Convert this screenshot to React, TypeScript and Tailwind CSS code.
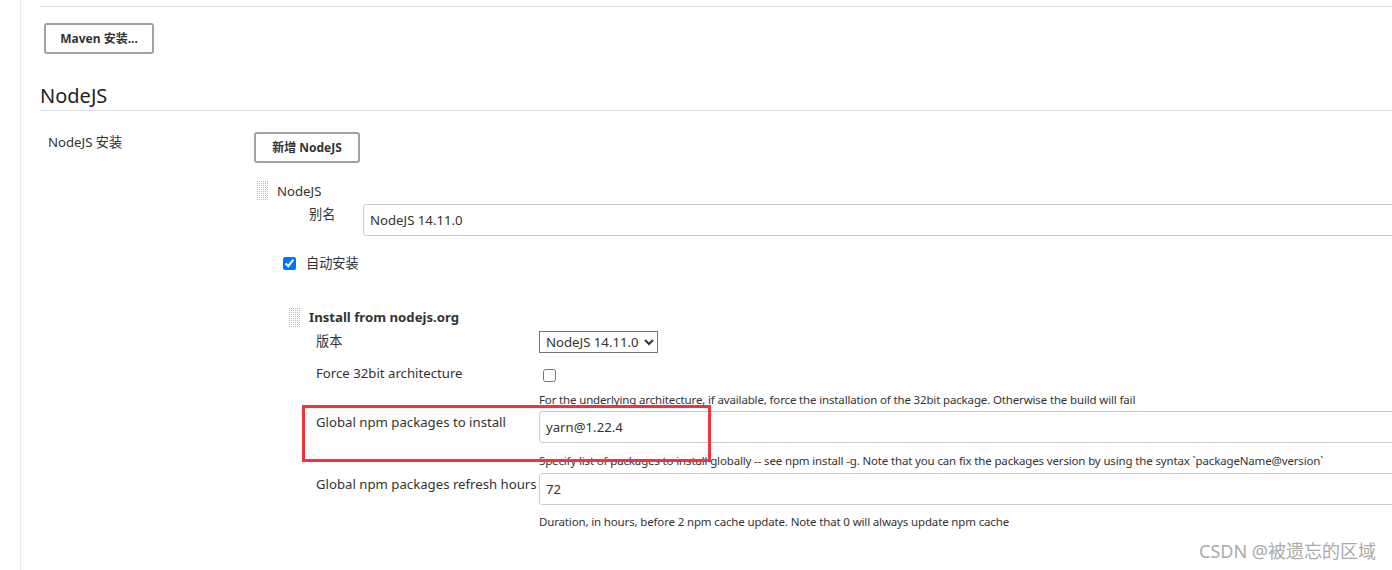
function DragHandle() {
  return (
    <svg width="11" height="19" viewBox="0 0 11 19" className="shrink-0">
      <defs>
        <pattern id="dots" width="2" height="2" patternUnits="userSpaceOnUse">
          <rect width="1" height="1" fill="#b9b9b9" />
        </pattern>
      </defs>
      <rect width="11" height="19" fill="url(#dots)" />
    </svg>
  );
}

function Help({ children }: { children: React.ReactNode }) {
  return <div className="text-[11.5px] leading-[16px] text-[#333] tracking-[-0.15px]">{children}</div>;
}

export default function App() {
  return (
    <div
      className="relative w-[1392px] h-[570px] overflow-hidden bg-white text-[#333]"
      style={{ fontFamily: '"Noto Sans", "Noto Sans CJK SC", sans-serif' }}
    >
      <div className="ml-[20px] h-full border-l border-[#e6ecf1] pl-[19px] w-[1600px]">
        <div className="h-[7px] border-b border-[#dfe2e5]" />

        <button className="mt-[16px] h-[31px] w-[110px] rounded-[3px] border-2 border-[#9aa2aa] text-[12px] font-bold text-[#333] ml-[4px]">
          Maven 安装...
        </button>

        <h2 className="mt-[30px] text-[20px] leading-[24px] pb-[2px] border-b border-[#dfe2e5] text-[#222]">NodeJS</h2>

        <div className="flex mt-[21px]">
          <div className="w-[214px] pl-[8px] text-[13.2px] leading-[18px] pt-[1px]">NodeJS 安装</div>
          <div className="flex-1">
            <button className="h-[31px] w-[106px] rounded-[3px] border-2 border-[#9aa2aa] text-[12px] font-bold text-[#333]">
              新增 NodeJS
            </button>

            <div className="flex items-center gap-[9px] mt-[18px] pl-[3px]">
              <DragHandle />
              <span className="text-[13.2px] leading-[18px]">NodeJS</span>
            </div>

            <div className="flex items-center mt-[4px]">
              <div className="w-[109px] pl-[55px] text-[13.2px] -mt-[10px]">别名</div>
              <input
                readOnly
                value="NodeJS 14.11.0"
                className="flex-1 h-[32px] border border-[#ccc] rounded-[3px] px-[6px] text-[13.2px] text-[#333] outline-none"
              />
            </div>

            <div className="flex items-center gap-[10px] mt-[18px] pl-[29px]">
              <input type="checkbox" defaultChecked className="w-[13px] h-[13px] accent-[#0075ff] m-0" />
              <span className="text-[13.2px]">自动安装</span>
            </div>

            <div className="mt-[34px] pl-[35px]">
              <div className="flex items-center gap-[9px]">
                <DragHandle />
                <span className="text-[13.2px] font-bold leading-[18px]">Install from nodejs.org</span>
              </div>

              <div className="pl-[27px]">
                <div className="flex items-center mt-[4px]">
                  <div className="w-[223px] text-[13.2px]">版本</div>
                  <select className="h-[22px] border border-[#767676] text-[13.2px] text-[#333] px-[2px] bg-white">
                    <option>NodeJS 14.11.0</option>
                  </select>
                </div>

                <div className="flex mt-[11px]">
                  <div className="w-[223px] text-[13.2px] leading-[18px]">Force 32bit architecture</div>
                  <div className="pl-[4px]">
                    <input type="checkbox" className="w-[13px] h-[13px] m-0" />
                  </div>
                </div>
                <div className="ml-[223px] mt-[4px]">
                  <Help>For the underlying architecture, if available, force the installation of the 32bit package. Otherwise the build will fail</Help>
                </div>

                <div className="flex mt-[3px]">
                  <div className="w-[223px] text-[13.2px] leading-[18px] pt-[2px]">Global npm packages to install</div>
                  <input
                    readOnly
                    value="yarn@1.22.4"
                    className="flex-1 h-[32px] border border-[#ccc] rounded-[3px] px-[6px] text-[13.2px] text-[#333] outline-none"
                  />
                </div>
                <div className="ml-[223px] mt-[10px]">
                  <Help>Specify list of packages to install globally -- see npm install -g. Note that you can fix the packages version by using the syntax `packageName@version`</Help>
                </div>

                <div className="flex mt-[4px]">
                  <div className="w-[223px] text-[13.2px] leading-[18px] pt-[2px] whitespace-nowrap">Global npm packages refresh hours</div>
                  <input
                    readOnly
                    value="72"
                    className="flex-1 h-[32px] border border-[#ccc] rounded-[3px] px-[6px] text-[13.2px] text-[#333] outline-none"
                  />
                </div>
                <div className="ml-[223px] mt-[9px]">
                  <Help>Duration, in hours, before 2 npm cache update. Note that 0 will always update npm cache</Help>
                </div>
              </div>
            </div>
          </div>
        </div>
      </div>

      <div className="absolute left-[302px] top-[405px] w-[409px] h-[57px] border-[3px] border-[#f2343a]" />

      <div className="absolute right-[16px] top-[539px] text-[18px] text-[#aaa] leading-[24px]">CSDN @被遗忘的区域</div>
    </div>
  );
}
